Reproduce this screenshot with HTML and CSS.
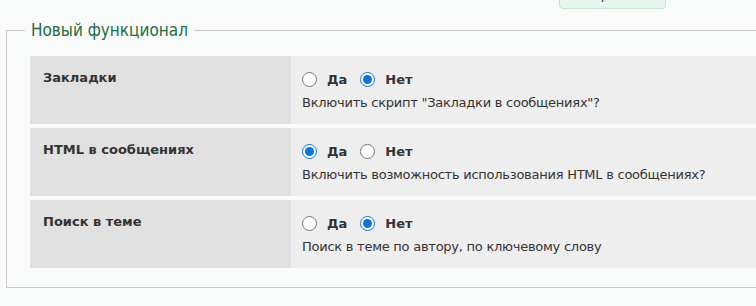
FILE: index.html
```html
<!DOCTYPE html>
<html lang="ru">
<head>
    <meta charset="UTF-8">
    <meta name="viewport" content="width=device-width, initial-scale=1.0">
    <title>Настройки</title>
    <link rel="stylesheet" href="styles.css">
</head>
<body>
    <div class="top-actions">
        <button class="save-button" type="button">Сохранить</button>
    </div>

    <fieldset class="settings-group">
        <legend>Новый функционал</legend>

        <div class="option-row">
            <div class="option-title">Закладки</div>
            <div class="option-value">
                <div class="choices">
                    <label><input type="radio" name="bookmarks" value="1"> Да</label>
                    <label><input type="radio" name="bookmarks" value="0" checked> Нет</label>
                </div>
                <div class="option-desc">Включить скрипт "Закладки в сообщениях"?</div>
            </div>
        </div>

        <div class="option-row">
            <div class="option-title">HTML в сообщениях</div>
            <div class="option-value">
                <div class="choices">
                    <label><input type="radio" name="html" value="1" checked> Да</label>
                    <label><input type="radio" name="html" value="0"> Нет</label>
                </div>
                <div class="option-desc">Включить возможность использования HTML в сообщениях?</div>
            </div>
        </div>

        <div class="option-row">
            <div class="option-title">Поиск в теме</div>
            <div class="option-value">
                <div class="choices">
                    <label><input type="radio" name="search" value="1"> Да</label>
                    <label><input type="radio" name="search" value="0" checked> Нет</label>
                </div>
                <div class="option-desc">Поиск в теме по автору, по ключевому слову</div>
            </div>
        </div>
    </fieldset>
</body>
</html>
```

FILE: styles.css
```css
body {
    font-family: "DejaVu Sans", Tahoma, sans-serif;
    font-size: 13px;
    color: #333;
    margin: 0;
    padding: 0;
    background-color: #f9fafa;
    overflow: hidden;
}

.top-actions {
    display: flex;
    padding-left: 559px;
    height: 9px;
    overflow: hidden;
}

.save-button {
    width: 107px;
    height: 30px;
    margin-top: -21px;
    border: 1px solid #c6e5d3;
    border-radius: 4px;
    background-color: #e7f5ee;
    color: #333;
    font-family: inherit;
    font-size: 13px;
    padding: 0;
}

.settings-group {
    margin: 10px -20px 0 6px;
    padding: 0 0 19px 0;
    border: 1px solid #cacaca;
}

.settings-group legend {
    margin-left: 18px;
    padding: 0 6px;
    font-family: "DejaVu Sans Condensed", "DejaVu Sans", sans-serif;
    font-stretch: condensed;
    font-size: 17px;
    line-height: 22px;
    color: #236b43;
}

.option-row {
    display: grid;
    grid-template-columns: 261px 1fr;
    height: 68px;
    margin-left: 23px;
    margin-top: 4px;
}

.option-row:first-of-type {
    margin-top: 15px;
}

.option-title {
    background-color: #e0e1e0;
    padding: 14px 13px;
    font-weight: bold;
}

.option-value {
    background-color: #eeeeee;
    padding: 14px 11px;
}

.choices {
    display: flex;
    align-items: center;
    gap: 13px;
    font-weight: bold;
    height: 18px;
}

.choices label {
    display: flex;
    align-items: center;
    gap: 10px;
}

.choices input {
    width: 15px;
    height: 15px;
    margin: 0;
    accent-color: #0a73e6;
}

.option-desc {
    margin-top: 7px;
    letter-spacing: -0.25px;
}
```
